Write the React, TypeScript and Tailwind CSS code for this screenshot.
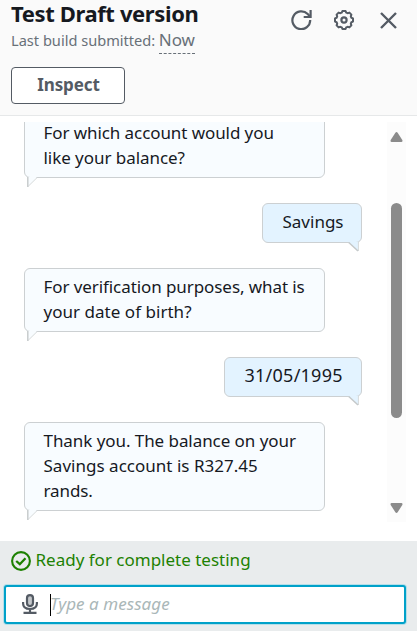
import type { ReactNode } from "react";

function BotBubble({ children, className = "" }: { children: ReactNode; className?: string }) {
  return (
    <div
      className={
        "relative w-[301px] shrink-0 self-start rounded-md border border-[#ccd0d2] bg-[#f8fcff] pt-[5px] pb-[7px] pl-[18.5px] " +
        className
      }
    >
      {children}
      <svg className="absolute top-full left-0.5" width="12" height="11" viewBox="0 0 12 11" fill="none">
        <path d="M0 0H10L1 9Z" fill="#f8fcff" />
        <path d="M10.3 .4L1.2 9.3" stroke="#d5d9da" />
        <path d="M.8 0V10" stroke="#c8cccd" strokeWidth="1.5" />
      </svg>
    </div>
  );
}

function UserBubble({ children, className = "" }: { children: ReactNode; className?: string }) {
  return (
    <div
      className={
        "relative mr-[25px] h-10 shrink-0 self-end rounded-md border border-[#ccd0d2] bg-[#e3f3ff] pt-[5px] pl-[19.5px] " +
        className
      }
    >
      {children}
      <svg className="absolute top-full right-0.5" width="12" height="11" viewBox="0 0 12 11" fill="none">
        <path d="M1 0H11V9Z" fill="#e3f3ff" />
        <path d="M11.4 0V9" stroke="#d5d9da" />
        <path d="M1.5 .3L11 9" stroke="#c5c9ca" strokeWidth="1.5" />
      </svg>
    </div>
  );
}

// Points alternating between the crown and the notch of each of the eight teeth.
const gearPath =
  "M8.4 1H11.6L12.2 2.6L13.6 3.2L15.4 2.6L17.4 4.6L16.8 6.4L17.4 7.8L19 8.4V11.6L17.4 12.2L16.8 13.6L17.4 15.4L15.4 17.4L13.6 16.8L12.2 17.4L11.6 19H8.4L7.8 17.4L6.4 16.8L4.6 17.4L2.6 15.4L3.2 13.6L2.6 12.2L1 11.6V8.4L2.6 7.8L3.2 6.4L2.6 4.6L4.6 2.6L6.4 3.2L7.8 2.6Z";

export default function App() {
  return (
    <div className="flex h-[631px] w-[417px] flex-col overflow-hidden bg-white font-['Noto_Sans',sans-serif] text-[17px] leading-[25px] whitespace-nowrap text-[#16191f]">
      <header className="flex h-[116px] shrink-0 justify-between border-b border-[#e6e8e9] bg-[#fafafa] pr-5 pl-[11px]">
        <div>
          <h1 className="text-[22px] leading-[26px] font-bold tracking-[-0.38px]">Test Draft version</h1>
          <div className="mt-px flex h-[27px] text-[#687078]">
            <span className="pt-px text-[14.6px]">Last build submitted:</span>
            <span className="ml-[3.5px] h-[27px] border-b border-dashed border-[#687078]">Now</span>
          </div>
          <button className="mt-[13px] flex h-[37px] w-[114px] items-center justify-center rounded-sm border border-[#545b64] bg-white pb-0.5 pl-px font-bold tracking-[-0.1px] text-[#545b64]">
            Inspect
          </button>
        </div>
        <div className="flex h-10 items-center gap-[22px] text-[#545b64]">
          <svg width="21" height="20" viewBox="0 0 21 20" fill="none" stroke="currentColor" strokeWidth="2.2">
            <path d="M19.2 10A8.9 8.9 0 1 1 16.7 4.1L19 6.5" />
            <path d="M19.6 0V7H12.7" />
          </svg>
          <svg width="20" height="20" viewBox="0 0 20 20" fill="none" stroke="currentColor" strokeWidth="2" strokeLinejoin="round">
            <path d={gearPath} />
            <circle cx="10" cy="10" r="2.6" strokeWidth="2.2" />
          </svg>
          <svg className="ml-1" width="17" height="17" viewBox="0 0 17 17" fill="none" stroke="currentColor" strokeWidth="2.4">
            <path d="M1 1L16 16M16 1L1 16" />
          </svg>
        </div>
      </header>

      <main className="mt-1.5 flex h-[400px] shrink-0 overflow-hidden pr-[11px] pl-6">
        <div className="-mt-2 flex flex-1 flex-col gap-[25px]">
          <BotBubble>
            <p className="tracking-[-0.08px]">For which account would you</p>
            <p className="tracking-[-0.05px]">like your balance?</p>
          </BotBubble>
          <UserBubble className="w-[100px]">Savings</UserBubble>
          <BotBubble>
            <p className="tracking-[-0.08px]">For verification purposes, what is</p>
            <p className="tracking-[0.03px]">your date of birth?</p>
          </BotBubble>
          <UserBubble className="w-[138px] text-[18px] tracking-[0.25px]">31/05/1995</UserBubble>
          <BotBubble>
            <p className="tracking-[-0.06px]">Thank you. The balance on your</p>
            <p className="tracking-[0.02px]">Savings account is R327.45</p>
            <p className="tracking-[-0.1px]">rands.</p>
          </BotBubble>
        </div>
        <div className="flex w-[19px] flex-col items-center bg-[#fcfcfc] text-[#8b8b8b]">
          <svg className="mt-2.5" width="13" height="10" viewBox="0 0 13 10" fill="currentColor">
            <path d="M5.2 1Q6.5-.8 7.8 1L12.3 8Q13 9.8 11.3 10H1.7Q0 9.8 .7 8Z" />
          </svg>
          <div className="mt-[61px] h-[215px] w-[11px] rounded-full bg-[#8b8b8b]" />
          <svg className="mt-[85px]" width="13" height="10" viewBox="0 0 13 10" fill="currentColor">
            <path d="M5.2 9Q6.5 10.8 7.8 9L12.3 2Q13 .2 11.3 0H1.7Q0 .2 .7 2Z" />
          </svg>
        </div>
      </main>

      <footer className="mt-[19px] flex-1 bg-[#e9eced] pr-[11px] pl-1">
        <div className="flex h-11 pt-1.5 pl-[7px] text-[#1d8102]">
          <svg className="mt-1 mr-[4.5px]" width="20" height="20" viewBox="0 0 20 20" fill="none" stroke="currentColor" strokeWidth="2.1">
            <circle cx="10" cy="10" r="8.9" />
            <path d="M5.2 10L8.8 13.2L14.5 7.3" strokeWidth="2.3" />
          </svg>
          <span>Ready for complete testing</span>
        </div>
        <div className="flex h-[39px] items-center rounded-[3px] border-2 border-[#00a1c9] bg-white pl-4 shadow-[0_0_0_1px_#b5dfe9]">
          <svg className="-mt-px" width="16" height="20" viewBox="0 0 16 20" fill="none" stroke="#545b64" strokeWidth="2.2">
            <rect x="5" y="1.1" width="6" height="11" rx="3" fill="#c5c8cb" />
            <path d="M1.1 8V9.5Q1.1 15 8 15T14.9 9.5V8M8 15V19M1.5 18.9H14.5" />
          </svg>
          <span className="ml-3 h-[22px] w-px bg-black" />
          <span className="-ml-px pb-0.5 tracking-[0.05px] text-[#aab7b8] italic">Type a message</span>
        </div>
      </footer>
    </div>
  );
}
